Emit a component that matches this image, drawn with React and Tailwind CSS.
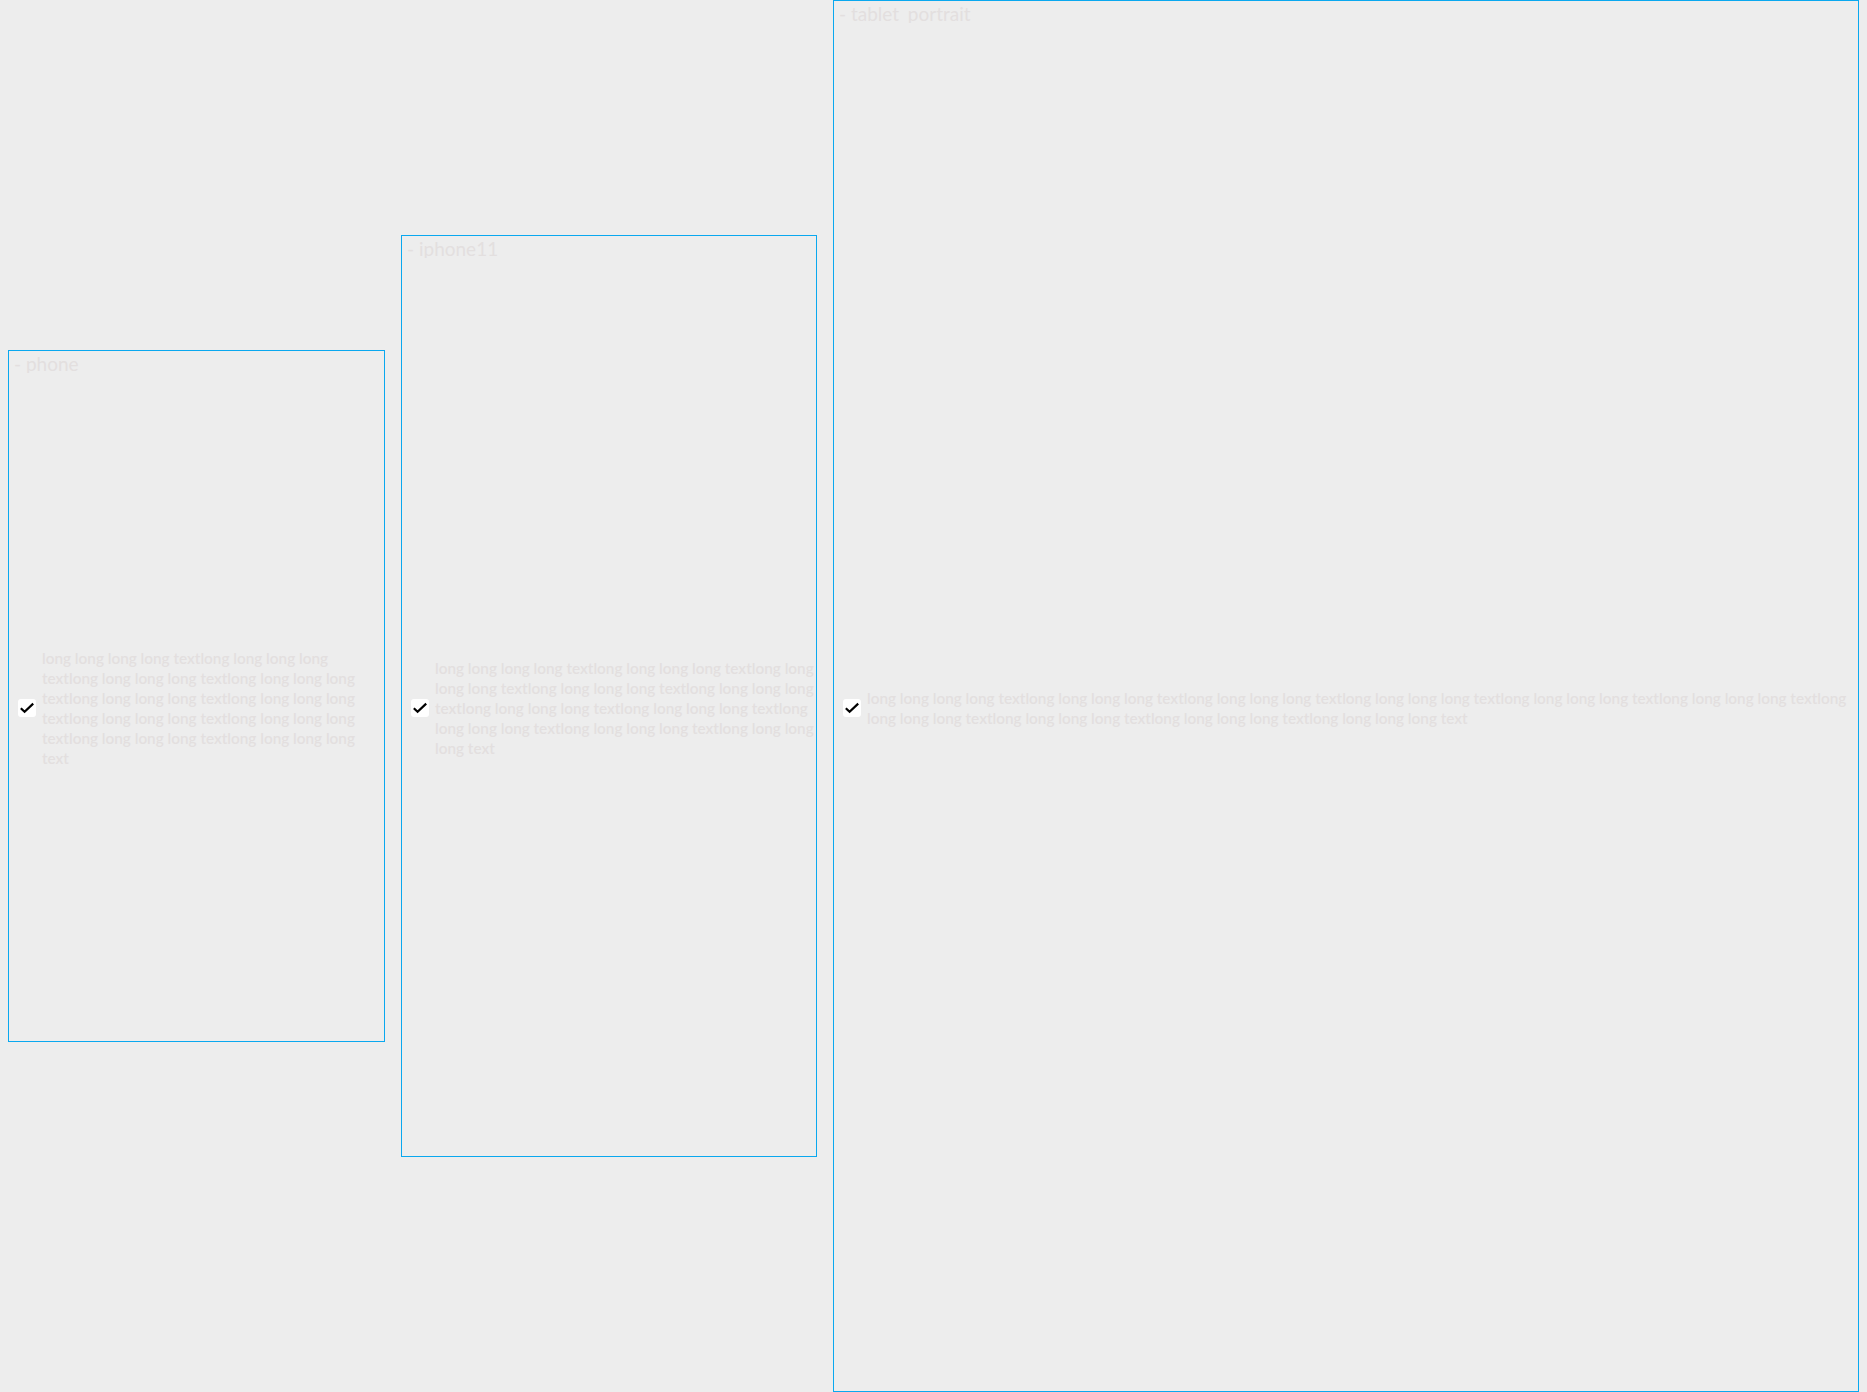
import React from "react";

const TEXT = "long long long long text".repeat(10);

function Check() {
  return (
    <div className="w-[18px] h-[18px] shrink-0 rounded-[3px] bg-white flex items-center justify-center">
      <svg width="18" height="18" viewBox="0 0 18 18" fill="none">
        <path d="M2.8 9.2 L6.6 12.8 L15.2 4.6" stroke="#000" strokeWidth="2.2" strokeLinecap="butt" strokeLinejoin="miter" />
      </svg>
    </div>
  );
}

function Frame({ label, w, h }) {
  return (
    <div className={`shrink-0 border border-[#0aa8ef] flex flex-col ${w} ${h}`}>
      <div className="h-[24px] shrink-0 pl-[5px]">
        <div className="h-[22px] overflow-hidden text-[19px] leading-[25px] text-[#e3dfdf] whitespace-nowrap">
          {label}
        </div>
      </div>
      <div className="flex-1 flex items-center pl-[9px]">
        <div className="flex items-center gap-[6px] min-w-0">
          <Check />
          <div className="text-[15.3px] leading-[20px] font-semibold text-[#e3dfdf] break-words min-w-0">
            {TEXT}
          </div>
        </div>
      </div>
    </div>
  );
}

export default function App() {
  return (
    <div
      className="h-[1392px] w-[1867px] bg-[#ededed] flex items-center gap-4 px-2 overflow-hidden"
      style={{ fontFamily: "Lato, 'Liberation Sans', sans-serif" }}
    >
      <Frame label="- phone" w="w-[377px]" h="h-[692px]" />
      <Frame label="- iphone11" w="w-[416px]" h="h-[922px]" />
      <Frame label="- tablet_portrait" w="w-[1026px]" h="h-[1392px]" />
    </div>
  );
}
